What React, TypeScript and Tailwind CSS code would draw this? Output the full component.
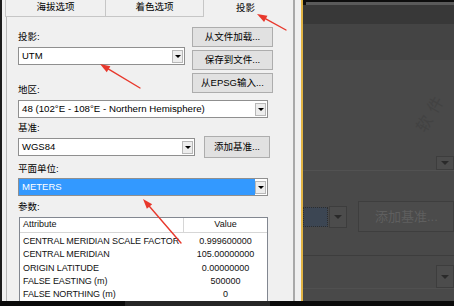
import { clsx } from 'clsx';

const cn = (...a: any[]) => clsx(a);

function DropArrow({ big }: { big?: boolean }) {
  return (
    <div className={cn(
      "flex items-center justify-center border",
      big ? "w-[18px] h-full border-[#3d3d3d] bg-[#4c4c4c]" : "w-[11px] h-[13px] mr-[1px] border-[#b8b8b8] bg-[#ededed]"
    )}>
      <div className={cn(
        "w-0 h-0 border-l-transparent border-r-transparent",
        big ? "border-l-[4px] border-r-[4px] border-t-[4px] border-t-[#2a2a2a]" : "border-l-[3px] border-r-[3px] border-t-[3px] border-t-black"
      )} />
    </div>
  );
}

function Combo({ text, className, selected }: { text: string; className?: string; selected?: boolean }) {
  return (
    <div className={cn("h-[18px] border border-[#8f8f8f] bg-white flex items-center", className)}>
      <div className={cn("flex-1 h-full flex items-center pl-[3px] whitespace-nowrap", selected && "bg-[#3399ff] text-white")}>
        {text}
      </div>
      <DropArrow />
    </div>
  );
}

function WinButton({ children, className }: { children: React.ReactNode; className?: string }) {
  return (
    <div className={cn("flex items-center justify-center border border-[#adadad] bg-[#e1e1e1] text-black whitespace-nowrap", className)}>
      {children}
    </div>
  );
}

function Label({ children, className }: { children: React.ReactNode; className?: string }) {
  return <div className={cn("h-[12px] leading-[12px] text-black", className)}>{children}</div>;
}

function Arrow({ x1, y1, x2, y2 }: { x1: number; y1: number; x2: number; y2: number }) {
  const dx = x2 - x1, dy = y2 - y1;
  const len = Math.hypot(dx, dy);
  const ux = dx / len, uy = dy / len;
  const L = 10, W = 3.5;
  const bx = x2 - ux * L, by = y2 - uy * L;
  const pts = `${x2},${y2} ${bx - uy * W},${by + ux * W} ${bx + uy * W},${by - ux * W}`;
  return (
    <g>
      <line x1={x1} y1={y1} x2={bx} y2={by} stroke="#e8382c" strokeWidth={1.4} strokeLinecap="round" />
      <polygon points={pts} fill="#e8382c" />
    </g>
  );
}

const params = [
  ["CENTRAL MERIDIAN SCALE FACTOR", "0.999600000"],
  ["CENTRAL MERIDIAN", "105.00000000"],
  ["ORIGIN LATITUDE", "0.00000000"],
  ["FALSE EASTING (m)", "500000"],
  ["FALSE NORTHING (m)", "0"],
];

export default function App() {
  return (
    <div className="relative w-[454px] h-[306px] overflow-hidden flex flex-col bg-black font-['Liberation_Sans','Noto_Sans_CJK_SC',sans-serif] text-[9.5px]">
      <div className="flex h-[301px]">
        {/* dialog */}
        <div className="flex w-[301px] h-full bg-[#f0f0f0] border-l-2 border-[#1c1c1c]">
          <div className="flex-1 flex flex-col">
            {/* tabs */}
            <div className="flex items-end h-[17px] pl-[3px]">
              <div className="w-[100px] h-[17px] border-l border-b border-[#c6c6c6] flex items-center justify-center pb-[1px]">海拔选项</div>
              <div className="w-[98px] h-[17px] border-l border-b border-[#c6c6c6] flex items-center justify-center pb-[1px]">着色选项</div>
              <div className="flex-1 h-[17px] border-l border-[#c6c6c6] flex justify-center pt-[1px] pr-[6px]">投影</div>
            </div>
            {/* page */}
            <div className="flex-1 ml-[4px] border-l border-[#b9b9b9] pl-[11px] pt-[10px] flex flex-col">
              <div className="flex gap-[7px]">
                <div className="w-[167px] flex flex-col pt-[4px]">
                  <Label>投影:</Label>
                  <Combo text="UTM" className="mt-[4px]" />
                  <Label className="mt-[19px]">地区:</Label>
                </div>
                <div className="w-[81px] flex flex-col gap-[3px]">
                  <WinButton className="h-[20px]">从文件加载...</WinButton>
                  <WinButton className="h-[20px]">保存到文件...</WinButton>
                  <WinButton className="h-[20px]">从EPSG输入...</WinButton>
                </div>
              </div>
              <Combo text="48 (102°E - 108°E - Northern Hemisphere)" className="w-[250px] mt-[4px] text-[9.7px]" />
              <Label className="mt-[4px]">基准:</Label>
              <div className="flex items-center gap-[9px] mt-[2px] h-[22px]">
                <Combo text="WGS84" className="w-[177px]" />
                <WinButton className="w-[66px] h-[22px]">添加基准...</WinButton>
              </div>
              <Label className="mt-[5px]">平面单位:</Label>
              <Combo text="METERS" selected className="w-[250px] mt-[3px]" />
              <Label className="mt-[5px]">参数:</Label>
              <div className="mt-[4px] ml-[1px] w-[249px] flex-1 border-l border-r border-t border-[#828790] bg-white text-[9px] text-[#111]">
                <div className="flex h-[15px] border-b border-[#d6d6d6]">
                  <div className="w-[164px] border-r border-[#d6d6d6] pl-[3px] flex items-center">Attribute</div>
                  <div className="flex-1 flex items-center justify-center">Value</div>
                </div>
                <div className="pt-[2px]">
                  {params.map(([k, v]) => (
                    <div key={k} className="flex h-[13.3px] items-center">
                      <div className="w-[164px] pl-[3px] whitespace-nowrap tracking-[-0.1px]">{k}</div>
                      <div className="flex-1 text-center">{v}</div>
                    </div>
                  ))}
                </div>
              </div>
            </div>
          </div>
          <div className="w-[2px] bg-[#a9a9a9]" />
          <div className="w-[6px] bg-[#f0f0f0]" />
        </div>
        <div className="w-[2px] bg-[#e2b445]" />
        {/* darkened background */}
        <div className="flex-1 flex flex-col bg-[#494949]">
          <div className="h-[2px] bg-[#0d0d0d]" />
          <div className="h-[3px] flex"><div className="w-[3px] bg-[#0d0d0d]" /><div className="flex-1 bg-[#5a5a5a]" /></div>
          <div className="h-[19px] bg-[#383838]" />
          <div className="h-[36px] bg-[#444444]" />
          <div className="h-[96px]" />
          <div className="h-[15px] flex justify-end border-b border-[#525252]">
            <DropArrow big />
          </div>
          <div className="h-[30px]" />
          <div className="h-[31px] flex items-center">
            <div className="w-[25px] h-[20px] bg-[#3c4653] border border-dotted border-[#2d2d2d]" />
            <div className="h-[22px] ml-[1px]"><DropArrow big /></div>
            <div className="ml-[11px] flex-1 h-full border border-[#3e3e3e] bg-[#4b4b4b] flex items-center pl-[16px] text-[13px] text-[#5f5f5f]">添加基准...</div>
          </div>
          <div className="h-[23px]" />
          <div className="h-[1px] bg-[#3d3d3d]" />
          <div className="h-[9px]" />
          <div className="h-[24px] flex justify-end border-b border-[#505050]">
            <DropArrow big />
          </div>
        </div>
      </div>
      <div className="h-[5px] flex">
        <div className="w-[125px] bg-[#0a0a0a]" />
        <div className="w-[145px] bg-[#262626]" />
        <div className="flex-1 bg-[#0a0a0a]" />
      </div>

      {/* faint watermark on the dark side */}
      <span className="absolute left-[410px] top-[100px] -rotate-[60deg] text-[16px] tracking-[6px] text-[#3f3f3f] opacity-60 whitespace-nowrap pointer-events-none">软件</span>

      <svg className="absolute inset-0 pointer-events-none" width={454} height={306}>
        <Arrow x1={286} y1={30} x2={257} y2={14} />
        <Arrow x1={140} y1={88} x2={100} y2={64} />
        <Arrow x1={181} y1={243} x2={143} y2={199} />
      </svg>
    </div>
  );
}
